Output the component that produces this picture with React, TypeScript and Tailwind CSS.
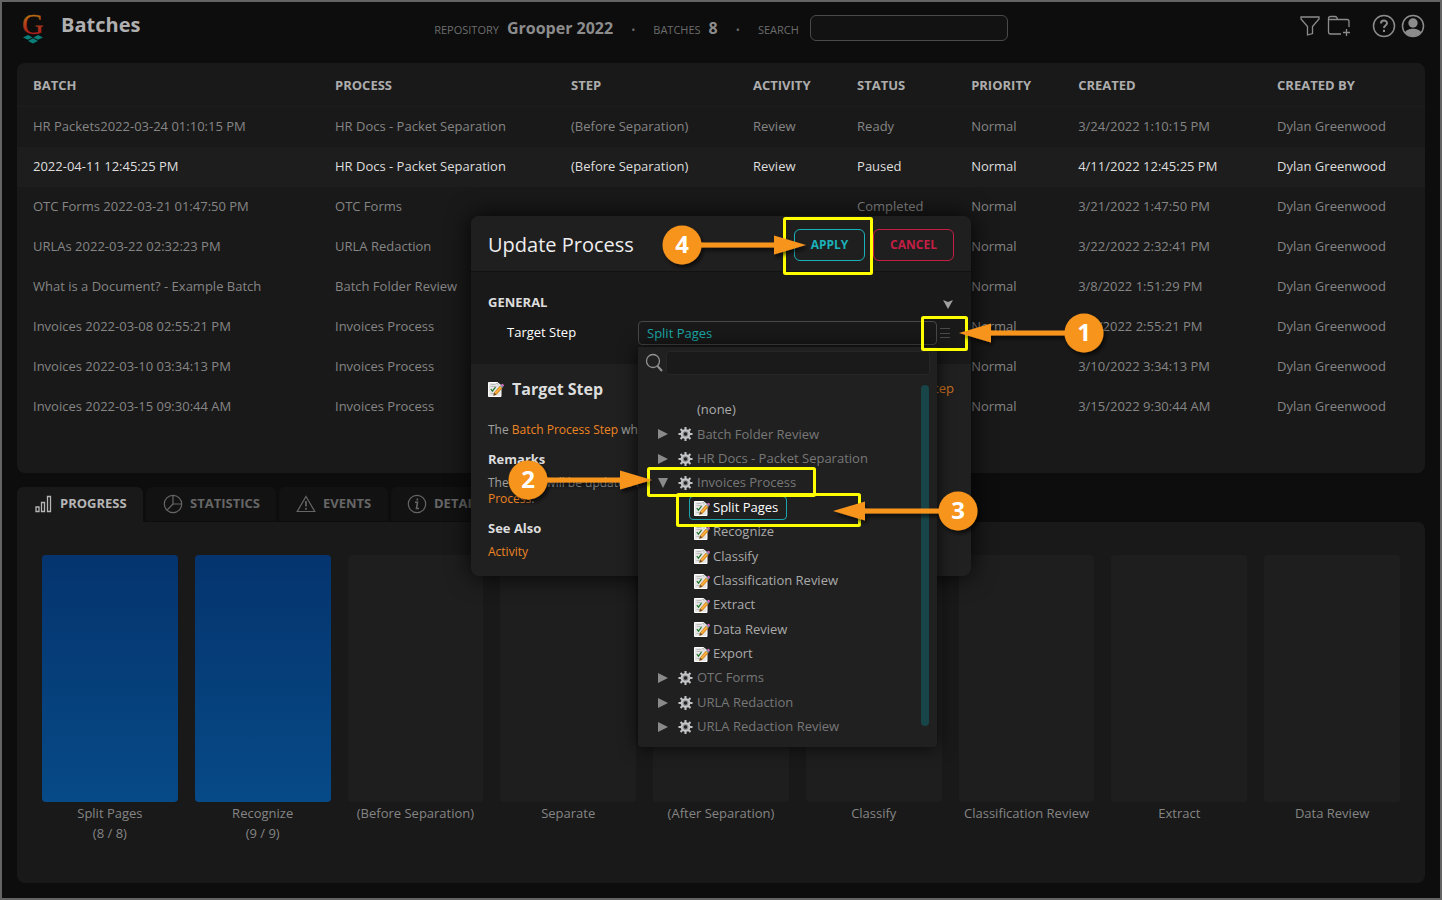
import React from "react";

const cols: { label: string; w: string }[] = [
  { label: "BATCH", w: "w-[21.45%]" },
  { label: "PROCESS", w: "w-[16.76%]" },
  { label: "STEP", w: "w-[12.93%]" },
  { label: "ACTIVITY", w: "w-[7.39%]" },
  { label: "STATUS", w: "w-[8.1%]" },
  { label: "PRIORITY", w: "w-[7.6%]" },
  { label: "CREATED", w: "w-[14.13%]" },
  { label: "CREATED BY", w: "w-[11.64%]" },
];

const rows: string[][] = [
  ["HR Packets2022-03-24 01:10:15 PM", "HR Docs - Packet Separation", "(Before Separation)", "Review", "Ready", "Normal", "3/24/2022 1:10:15 PM", "Dylan Greenwood"],
  ["2022-04-11 12:45:25 PM", "HR Docs - Packet Separation", "(Before Separation)", "Review", "Paused", "Normal", "4/11/2022 12:45:25 PM", "Dylan Greenwood"],
  ["OTC Forms 2022-03-21 01:47:50 PM", "OTC Forms", "", "", "Completed", "Normal", "3/21/2022 1:47:50 PM", "Dylan Greenwood"],
  ["URLAs 2022-03-22 02:32:23 PM", "URLA Redaction", "", "", "", "Normal", "3/22/2022 2:32:41 PM", "Dylan Greenwood"],
  ["What is a Document? - Example Batch", "Batch Folder Review", "", "", "", "Normal", "3/8/2022 1:51:29 PM", "Dylan Greenwood"],
  ["Invoices 2022-03-08 02:55:21 PM", "Invoices Process", "", "", "", "Normal", "3/8/2022 2:55:21 PM", "Dylan Greenwood"],
  ["Invoices 2022-03-10 03:34:13 PM", "Invoices Process", "", "", "", "Normal", "3/10/2022 3:34:13 PM", "Dylan Greenwood"],
  ["Invoices 2022-03-15 09:30:44 AM", "Invoices Process", "", "", "", "Normal", "3/15/2022 9:30:44 AM", "Dylan Greenwood"],
];

const steps = [
  { name: "Split Pages", count: "(8 / 8)", done: true },
  { name: "Recognize", count: "(9 / 9)", done: true },
  { name: "(Before Separation)" },
  { name: "Separate" },
  { name: "(After Separation)" },
  { name: "Classify" },
  { name: "Classification Review" },
  { name: "Extract" },
  { name: "Data Review" },
];

function Logo() {
  return (
    <svg width="24" height="34" viewBox="0 0 24 34" className="overflow-visible" aria-label="Grooper">
      <defs>
        <linearGradient id="g" gradientUnits="userSpaceOnUse" x1="0" y1="3" x2="0" y2="24">
          <stop offset="0" stopColor="#b8760f" />
          <stop offset="0.5" stopColor="#b3431b" />
          <stop offset="1" stopColor="#a81c1c" />
        </linearGradient>
      </defs>
      <text x="1" y="24" fill="url(#g)" stroke="url(#g)" strokeWidth=".3" className="font-['Liberation_Serif',serif] text-[30px]">G</text>
      <path fill="#087f79" d="M2 27.500 7 25 11.500 27.500 7 29.700ZM12.500 27.500 17 25 22 27.500 17 29.700ZM7 31 12 28.300 17 31 12 33.500Z" />
    </svg>
  );
}

function StepIcon() {
  return (
    <svg width="16" height="16" viewBox="0 0 16 16" className="shrink-0" aria-hidden="true">
      <path d="M.5 1.500H9.500L13 4.500V15.500H.5Z" fill="#e6e6e6" stroke="#fff" />
      <path d="M2.500 3.500H7.500M2.500 5.500H8.500M2.500 12.500H6M8 2.500H10V4.500" stroke="#bdbdbd" fill="none" />
      <path d="M2.800 8 4.400 10.200 7.500 6.200" stroke="#20752c" strokeWidth="1.200" fill="none" />
      <path d="M5.500 14.500 6.300 11.700 12 5 14.200 7 8.300 13.500Z" fill="#f59a1c" stroke="#a86408" strokeWidth=".5" />
      <path d="M7 12.500 13 6" stroke="#ffd172" strokeWidth=".7" />
      <path d="M5.500 14.500 6.300 11.700 8.300 13.500Z" fill="#5b4531" />
      <path d="M12 5 13.200 3.700 15.200 5.700 14.100 7Z" fill="#8ba1ae" />
      <path d="M13.100 3.700 14.100 2.700Q15.700 2.500 16 4.500L15.200 5.700Z" fill="#d66bc0" />
    </svg>
  );
}

function Gear() {
  return (
    <svg width="15" height="16" viewBox="0 0 16 16" className="shrink-0" aria-hidden="true">
      <g stroke="#bfc2c4" strokeWidth="2.200">
        <path d="M8 .5V15.500M.5 8H15.500M2.700 2.700 13.300 13.300M13.300 2.700 2.700 13.300" />
      </g>
      <circle cx="8" cy="8" r="5.200" fill="#c3c5c6" />
      <circle cx="8" cy="8" r="3" fill="#85888b" />
      <circle cx="8" cy="8" r="1.800" fill="#202020" />
    </svg>
  );
}

function Branch({ name, open = false }: { name: string; open?: boolean }) {
  return (
    <button type="button" aria-expanded={open} className="flex h-6 w-full items-center pl-5 text-left text-[#777]">
      <svg width="10" height="10" viewBox="0 0 10 10" className="mr-[10px] shrink-0" aria-hidden="true">
        <path d={open ? "M0 0H10L5 10Z" : "M0 0 10 5 0 10Z"} fill="#8a8a8a" />
      </svg>
      <Gear />
      <span className="ml-1">{name}</span>
    </button>
  );
}

function Leaf({ name, selected = false }: { name: string; selected?: boolean }) {
  return (
    <div className="flex h-6 items-center pl-[51px]">
      <button
        type="button"
        className={
          selected
            ? "flex h-6 items-center gap-[3px] rounded border border-[#1ea5ab] pr-2 pl-1 text-white"
            : "flex h-6 items-center gap-[3px] border border-transparent pr-2 pl-1 text-[#aaa]"
        }
      >
        <StepIcon />
        {name}
      </button>
    </div>
  );
}

const tabIcons = [
  <svg key="p" width="18" height="18" viewBox="0 0 18 18" fill="none" stroke="currentColor" strokeWidth="1.300"><path d="M1 12H4V16.500H1ZM6.500 7.500H9.500V16.500H6.500ZM12.500 1.500H15.500V16.500H12.500Z" /></svg>,
  <svg key="s" width="20" height="20" viewBox="0 0 20 20" fill="none" stroke="currentColor" strokeWidth="1.200"><circle cx="10" cy="10" r="8.700" /><path d="M10 1.500V10H18.500M10 10 4 16.200" /></svg>,
  <svg key="e" width="20" height="20" viewBox="0 0 20 20" fill="none" stroke="currentColor" strokeWidth="1.200"><path d="M10 2.500 18.800 17.500H1.200Z" /><path d="M10 7V12.500M10 14V15.800" strokeWidth="1.700" /></svg>,
  <svg key="d" width="20" height="20" viewBox="0 0 20 20" fill="none" stroke="currentColor" strokeWidth="1.200"><circle cx="10" cy="10" r="8.700" /><path d="M8 8.300H10.500L9.500 14.500H12M10.300 4.500V6.500" strokeWidth="1.600" /></svg>,
];

function Callouts() {
  return (
    <svg width="500" height="560" viewBox="471 216 500 560" className="pointer-events-none absolute top-0 left-0 z-20 overflow-visible" aria-hidden="true">
      <defs>
        <filter id="sh" x="-20%" y="-50%" width="140%" height="220%">
          <feDropShadow dx="2" dy="3" stdDeviation="2" floodColor="#000" floodOpacity=".65" />
        </filter>
      </defs>
      <g fill="none" stroke="#ffff00" strokeWidth="3">
        <rect x="784.500" y="218.500" width="87" height="55" rx="1" />
        <rect x="922.500" y="317.500" width="44" height="32" rx="1" />
        <rect x="648.500" y="468.500" width="166" height="27" rx="1" />
        <rect x="677.500" y="494.500" width="182" height="31" rx="1" />
      </g>
      <g fill="#f7941e" stroke="#f7941e" filter="url(#sh)">
        <path d="M682 245H778" strokeWidth="5" /><path d="M774 235.500V254.500L806 245Z" stroke="none" />
        <circle cx="682" cy="245" r="19.500" stroke="none" />
        <path d="M1084 333H987" strokeWidth="5" /><path d="M991 323.500V342.500L959 333Z" stroke="none" />
        <circle cx="1084" cy="333" r="19.500" stroke="none" />
        <path d="M528 480H624" strokeWidth="5" /><path d="M620 470.500V489.500L652 480Z" stroke="none" />
        <circle cx="528" cy="480" r="19.500" stroke="none" />
        <path d="M958 511H861" strokeWidth="5" /><path d="M865 501.500V520.500L833 511Z" stroke="none" />
        <circle cx="958" cy="511" r="19.500" stroke="none" />
      </g>
      <g fill="#fff" textAnchor="middle" className="font-['Open_Sans'] text-[24px] font-bold">
        <text x="682" y="253">4</text>
        <text x="1084" y="341">1</text>
        <text x="528" y="488">2</text>
        <text x="958" y="519">3</text>
      </g>
    </svg>
  );
}

function StepMenu() {
  return (
    <div className="absolute top-[131px] left-[167px] z-10 h-[400px] w-[299px] rounded-b bg-[#202020] text-[13px] shadow-[0_0_18px_rgba(0,0,0,0.75)]">
      <label className="flex items-center gap-[2px] px-[7px] pt-1">
        <svg width="19" height="20" viewBox="0 0 19 20" fill="none" stroke="#929292" aria-label="Find step"><circle cx="8" cy="8" r="6.500" strokeWidth="1.300" /><path d="M12.500 13 17 18" strokeWidth="2" /></svg>
        <input type="text" aria-label="Find step" className="h-6 min-w-0 flex-1 rounded border border-[#262626] bg-[#1a1a1a] px-2 text-[#aaa] outline-none" />
      </label>
      <div className="flex items-start pt-[10px] pr-2">
        <div className="flex h-[354px] flex-1 flex-col justify-between pt-[13px]">
          <button type="button" className="h-6 pl-[59px] text-left text-[#aaa]">(none)</button>
          <Branch name="Batch Folder Review" />
          <Branch name="HR Docs - Packet Separation" />
          <Branch name="Invoices Process" open />
          <Leaf name="Split Pages" selected />
          {["Recognize", "Classify", "Classification Review", "Extract", "Data Review", "Export"].map((n) => <Leaf key={n} name={n} />)}
          <Branch name="OTC Forms" />
          <Branch name="URLA Redaction" />
          <Branch name="URLA Redaction Review" />
        </div>
        <div className="h-[341px] w-2 rounded-full bg-[#174548]" />
      </div>
    </div>
  );
}

function Dialog() {
  return (
    <section role="dialog" aria-label="Update Process" className="absolute top-[214px] left-1/2 -ml-[250px] h-[360px] w-[500px] rounded-lg bg-[#202020] shadow-[0_0_24px_rgba(0,0,0,0.85)]">
      <div className="flex h-14 items-center rounded-t-lg border-b border-[#121212] bg-[#1f1f1f] px-[17px] pt-[2px]">
        <h2 className="flex-1 text-[20px] text-[#eee]">Update Process</h2>
        <button type="button" className="mr-2 h-8 w-[71px] rounded-md border border-[#1bb1b8] text-[12px] font-bold text-[#1bb1b8]">APPLY</button>
        <button type="button" className="h-8 w-[81px] rounded-md border border-[#c41e45] text-[12px] font-bold text-[#c41e45]">CANCEL</button>
      </div>
      <div className="h-[92px] bg-[#191919] pt-[21px] pl-[17px]">
        <div className="flex h-5 items-center justify-between pr-[17px]">
          <h3 className="text-[13px] font-bold text-[#ddd]">GENERAL</h3>
          <svg width="12" height="12" viewBox="0 0 12 12" aria-hidden="true"><path d="M1 3 6 5 11 3 6 12Z" fill="#a0a0a0" /></svg>
        </div>
        <div className="flex items-center pt-2">
          <label htmlFor="target" className="w-[150px] pl-[19px] text-[13px] text-white">Target Step</label>
          <input id="target" defaultValue="Split Pages" className="h-6 w-[299px] rounded border border-[#484848] bg-transparent px-2 text-[13px] text-[#1ba9ab] outline-none" />
          <button type="button" aria-label="Choose step" className="ml-[3px]">
            <svg width="10" height="12" viewBox="0 0 10 12" stroke="#4a4a4a"><path d="M0 1.500H10M0 6.500H10M0 10.500H10" /></svg>
          </button>
        </div>
      </div>
      <div className="px-[17px] pt-[11px] text-[12px] text-[#a0a0a0]">
        <div className="flex h-7 items-center">
          <StepIcon />
          <h3 className="ml-2 flex-1 text-[16px] font-bold text-[#ddd]">Target Step</h3>
          <a href="#step" className="text-[13px] text-[#cc711f]">Target Step</a>
        </div>
        <p className="mt-[19px] leading-4">The <a href="#bps" className="text-[#ee8422]">Batch Process Step</a> which will be updated.</p>
        <h4 className="mt-[11px] text-[13px] leading-5 font-bold text-[#ddd]">Remarks</h4>
        <p className="mt-[6px] leading-4">The batch will be updated to begin processing at the selected step of this <a href="#process" className="text-[#ee8422]">Batch Process</a>.</p>
        <h4 className="mt-[11px] text-[13px] leading-5 font-bold text-[#ddd]">See Also</h4>
        <a href="#activity" className="mt-[6px] block leading-4 text-[#ee8422]">Activity</a>
      </div>
      <StepMenu />
      <Callouts />
    </section>
  );
}

export default function App() {
  return (
    <div className="relative flex min-h-screen flex-col border-2 border-[#646464] bg-[#0d0d0d] px-[15px] font-['Open_Sans',sans-serif] text-[13px] text-[#858585]">
      <header className="flex h-[61px] items-start pt-2">
        <div className="flex flex-1 items-start pl-1">
          <Logo />
          <h1 className="ml-4 text-[20px] leading-[30px] font-bold text-[#b0b0b0]">Batches</h1>
        </div>
        <div className="flex h-9 items-center pr-1">
          <div className="flex items-baseline text-[11px] text-[#6c6c6c]">
            <span>REPOSITORY</span>
            <strong className="ml-2 text-[16px] text-[#8c8c8c]">Grooper 2022</strong>
            <span className="mx-[18px]">•</span>
            <span>BATCHES</span>
            <strong className="ml-2 text-[16px] text-[#8c8c8c]">8</strong>
            <span className="mx-[18px]">•</span>
            <label htmlFor="search">SEARCH</label>
          </div>
          <input id="search" type="search" className="ml-[11px] h-[26px] w-[198px] rounded-md border border-[#4a4a4a] bg-[#121212] px-2 outline-none" />
        </div>
        <div className="flex flex-1 items-center justify-end pt-1 text-[#8c8c8c]">
          <button type="button" aria-label="Filter"><svg width="20" height="24" viewBox="0 0 20 24" fill="none" stroke="currentColor" strokeWidth="1.300"><path d="M1 3H19V5L12.500 12.500V19.500L7.500 21V12.500L1 5Z" /></svg></button>
          <button type="button" aria-label="New folder" className="ml-[7px]"><svg width="24" height="24" viewBox="0 0 24 24" fill="none" stroke="currentColor" strokeWidth="1.300"><path d="M14 20H3.500Q1.500 20 1.500 18V4.500Q1.500 2.500 3.500 2.500H8Q10 2.500 10.500 5.500H20Q22 5.500 22 7.500V13M1.500 5.500H10.500M19.500 15V22M16 18.500H23" /></svg></button>
          <button type="button" aria-label="Help" className="ml-[21px]"><svg width="24" height="24" viewBox="0 0 24 24" fill="none" stroke="currentColor" strokeWidth="1.500"><circle cx="12" cy="12" r="10.500" /><path d="M9 9.500C9 5.500 15 5.700 15 9.200C15 11.500 12 11.700 12 14M12 15.700V18" strokeWidth="2" /></svg></button>
          <button type="button" aria-label="Account" className="ml-[5px]"><svg width="24" height="24" viewBox="0 0 24 24"><circle cx="12" cy="12" r="10.500" fill="none" stroke="currentColor" strokeWidth="1.500" /><circle cx="12" cy="9" r="4.700" fill="currentColor" /><path d="M4 18.500C6 13.500 18 13.500 20 18.500Q12 26 4 18.500Z" fill="currentColor" /></svg></button>
        </div>
      </header>

      <main className="flex flex-1 flex-col pb-[15px]">
        <div className="h-[410px] rounded-lg bg-[#191919]">
          <table className="w-full table-fixed border-separate border-spacing-0 text-left whitespace-nowrap">
            <thead>
              <tr className="text-[#adadad]">
                {cols.map((c) => <th key={c.label} scope="col" className={`${c.w} h-11 border-b border-[#1d1d1d] pt-0.5 pl-4 font-bold`}>{c.label}</th>)}
              </tr>
            </thead>
            <tbody>
              {rows.map((r, i) => (
                <tr key={r[0]} className={i === 1 ? "h-10 bg-[#1d1d1d] text-[#dedede]" : "h-10"}>
                  {r.map((t, j) => <td key={j} className="p-0 pl-4">{t}</td>)}
                </tr>
              ))}
            </tbody>
          </table>
        </div>

        <nav className="mt-[14px] flex gap-[3px] text-[13px] font-bold">
          <button type="button" className="flex h-[35px] w-[126px] items-center gap-[7px] rounded-t-md bg-[#191919] pb-[2px] pl-[18px] text-[#b5b5b5]">{tabIcons[0]}PROGRESS</button>
          <button type="button" className="flex h-[34px] w-[130px] items-center gap-[7px] rounded-t-md bg-[#121212] pb-px pl-[17px] text-[#666]">{tabIcons[1]}STATISTICS</button>
          <button type="button" className="flex h-[34px] w-[109px] items-center gap-[7px] rounded-t-md bg-[#121212] pb-px pl-[17px] text-[#666]">{tabIcons[2]}EVENTS</button>
          <button type="button" className="flex h-[34px] w-[110px] items-center gap-[7px] rounded-t-md bg-[#121212] pb-px pl-4 text-[#666]">{tabIcons[3]}DETAILS</button>
        </nav>
        <div className="grid flex-1 grid-cols-9 gap-[17px] rounded-b-lg rounded-tr-lg bg-[#191919] px-[25px] pt-[33px]">
          {steps.map((s) => (
            <div key={s.name} className="text-center leading-5 whitespace-nowrap">
              <div className={s.done ? "h-[247px] rounded bg-linear-to-b from-[#05346e] to-[#064a87]" : "h-[247px] rounded bg-[#1e1e1e]"} />
              <div className="pt-px">{s.name}</div>
              {s.count && <div>{s.count}</div>}
            </div>
          ))}
        </div>
      </main>
      <Dialog />
    </div>
  );
}
